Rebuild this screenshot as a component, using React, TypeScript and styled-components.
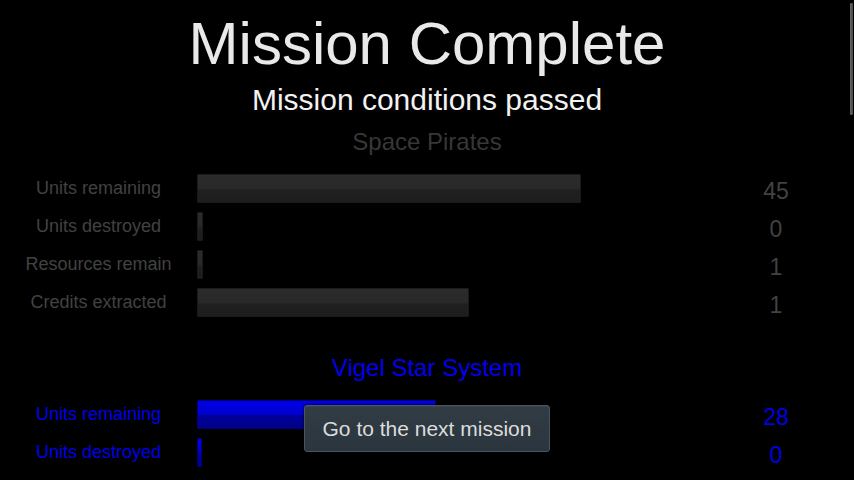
import React from "react";
import styled, { createGlobalStyle } from "styled-components";

const Global = createGlobalStyle`
  html, body {
    margin: 0;
    padding: 0;
    background: #000;
    overflow: hidden;
  }
  body {
    font-family: "Liberation Sans", Arial, sans-serif;
  }
`;

const Screen = styled.div`
  position: relative;
  width: 854px;
  height: 480px;
  overflow: hidden;
  background: #000;
`;

const Content = styled.div`
  display: flex;
  flex-direction: column;
  align-items: stretch;
  padding-top: 9px;
`;

const Title = styled.h1`
  margin: 0;
  text-align: center;
  font-size: 60px;
  line-height: 70px;
  font-weight: 400;
  color: #e9e9e9;
`;

const Subtitle = styled.h2`
  margin: 4px 0 0;
  text-align: center;
  font-size: 30px;
  line-height: 34px;
  font-weight: 400;
  color: #f2f2f2;
`;

const Section = styled.section<{ $gap: number }>`
  display: flex;
  flex-direction: column;
  margin-top: ${(p) => p.$gap}px;
`;

const SectionTitle = styled.div<{ $color: string }>`
  text-align: center;
  font-size: 24px;
  line-height: 28px;
  color: ${(p) => p.$color};
  margin-bottom: 18px;
`;

const Rows = styled.div`
  display: flex;
  flex-direction: column;
  gap: 9px;
`;

const Row = styled.div`
  display: grid;
  grid-template-columns: 197px 501px 156px;
  height: 29px;
`;

const Label = styled.div<{ $color: string }>`
  text-align: center;
  font-size: 18px;
  line-height: 28px;
  color: ${(p) => p.$color};
  white-space: nowrap;
`;

const Track = styled.div`
  display: flex;
  align-items: stretch;
`;

const Bar = styled.div<{ $blue?: boolean }>`
  box-sizing: border-box;
  border-radius: 1px;
  border: 1px solid ${(p) => (p.$blue ? "#00007a" : "#1a1a1a")};
  background: ${(p) =>
    p.$blue
      ? "linear-gradient(to bottom, #0000e8 0%, #0000cc 50%, #00009a 52%, #000088 100%)"
      : "linear-gradient(to bottom, #2b2b2b 0%, #292929 50%, #202020 55%, #1d1d1d 100%)"};
`;

const Value = styled.div<{ $color: string }>`
  box-sizing: border-box;
  height: 29px;
  padding-top: 5px;
  text-align: center;
  font-size: 23px;
  line-height: 24px;
  color: ${(p) => p.$color};
`;

const ScrollThumb = styled.div`
  position: absolute;
  top: 3px;
  right: 1px;
  width: 3px;
  height: 112px;
  border-radius: 1px;
  background: linear-gradient(to right, #666, #4a4a4a);
`;

const NextButton = styled.button`
  position: absolute;
  left: 50%;
  bottom: 28px;
  transform: translateX(-50%);
  box-sizing: border-box;
  width: 246px;
  height: 47px;
  padding: 0 16px;
  border: 1px solid #4a545d;
  border-radius: 3px;
  background: linear-gradient(to bottom, #313c45 0%, #2b353d 100%);
  box-shadow: 0 0 3px rgba(0, 0, 0, 0.9), inset 0 1px 0 rgba(255, 255, 255, 0.05);
  font-family: "Liberation Sans", Arial, sans-serif;
  font-size: 21px;
  color: #dcdcdc;
  white-space: nowrap;
  cursor: pointer;
`;

type Stat = { label: string; width: number; value: string };

const pirates: Stat[] = [
  { label: "Units remaining", width: 384, value: "45" },
  { label: "Units destroyed", width: 6, value: "0" },
  { label: "Resources remain", width: 6, value: "1" },
  { label: "Credits extracted", width: 272, value: "1" },
];

const vigel: Stat[] = [
  { label: "Units remaining", width: 239, value: "28" },
  { label: "Units destroyed", width: 5, value: "0" },
];

function StatsSection({
  name,
  stats,
  titleColor,
  textColor,
  blue,
  gap,
}: {
  name: string;
  stats: Stat[];
  titleColor: string;
  textColor: string;
  blue?: boolean;
  gap: number;
}) {
  return (
    <Section $gap={gap}>
      <SectionTitle $color={titleColor}>{name}</SectionTitle>
      <Rows>
        {stats.map((s) => (
          <Row key={s.label}>
            <Label $color={textColor}>{s.label}</Label>
            <Track>
              <Bar $blue={blue} style={{ width: s.width }} />
            </Track>
            <Value $color={textColor}>{s.value}</Value>
          </Row>
        ))}
      </Rows>
    </Section>
  );
}

export default function App() {
  return (
    <>
      <Global />
      <Screen>
        <Content>
          <Title>Mission Complete</Title>
          <Subtitle>Mission conditions passed</Subtitle>
          <StatsSection
            name="Space Pirates"
            stats={pirates}
            titleColor="#373737"
            textColor="#424242"
            gap={11}
          />
          <StatsSection
            name="Vigel Star System"
            stats={vigel}
            titleColor="#0000f0"
            textColor="#0000e6"
            blue
            gap={37}
          />
        </Content>
        <ScrollThumb />
        <NextButton>Go to the next mission</NextButton>
      </Screen>
    </>
  );
}
